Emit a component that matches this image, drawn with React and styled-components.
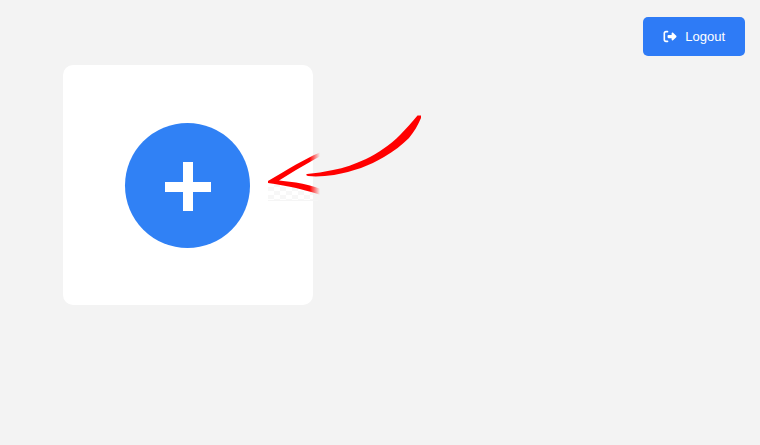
import React from "react";
import styled, { createGlobalStyle } from "styled-components";
import { FaRightFromBracket } from "react-icons/fa6";

const GlobalStyle = createGlobalStyle`
  *, *::before, *::after { box-sizing: border-box; }
  body {
    margin: 0;
    background: #f3f3f3;
    font-family: "Liberation Sans", Arial, sans-serif;
  }
`;

const Page = styled.div`
  display: flex;
  flex-direction: column;
  min-height: 100vh;
`;

const TopBar = styled.header`
  display: flex;
  justify-content: flex-end;
  padding: 17px 15px 9px;
`;

const LogoutButton = styled.button`
  display: inline-flex;
  align-items: center;
  gap: 8px;
  padding: 12px 20px;
  border: 0;
  border-radius: 5px;
  background: #2e7bf6;
  color: #fff;
  font-family: inherit;
  font-size: 13px;
  line-height: 15px;
  cursor: pointer;

  svg {
    width: 14px;
    height: 13px;
  }
`;

const Main = styled.main`
  display: flex;
  flex-wrap: wrap;
  gap: 20px;
  padding: 0 63px 63px;
`;

const Card = styled.section`
  position: relative;
  width: 250px;
  min-height: 240px;
  padding: 58px 62px 57px;
  border-radius: 10px;
  background: #fff;
`;

const AddButton = styled.button`
  display: flex;
  align-items: center;
  justify-content: center;
  width: 125px;
  height: 125px;
  padding: 0;
  border: 0;
  border-radius: 50%;
  background: #3081f5;
  cursor: pointer;

  svg {
    display: block;
    width: 51px;
    height: 51px;
  }
`;

const Pointer = styled.svg`
  position: absolute;
  left: 200px;
  top: 45px;
  width: 160px;
  height: 95px;
  pointer-events: none;
`;

function PlusIcon() {
  return (
    <svg viewBox="0 0 51 51" fill="#fff" aria-hidden="true">
      <path d="M21 2h10v20h18v10H31v19H21V32H3V22h18z" />
    </svg>
  );
}

function ArrowPointer() {
  return (
    <Pointer viewBox="0 0 160 95" aria-hidden="true">
      <defs>
        <linearGradient id="barb" gradientUnits="userSpaceOnUse" x1="5" y1="0" x2="57" y2="0">
          <stop offset="0" stopColor="#f00" />
          <stop offset="0.8" stopColor="#f00" />
          <stop offset="1" stopColor="#f00" stopOpacity="0" />
        </linearGradient>
        <pattern id="checks" width="12" height="8" patternUnits="userSpaceOnUse" x="5" y="77">
          <path d="M0 0h6v4H0zM6 4h6v4H6z" fill="#f7f7f7" />
        </pattern>
      </defs>
      <path d="M5 73L50 80V90H5z" fill="url(#checks)" />
      <path d="M5 90.500H55" stroke="#f5f5f5" fill="none" />
      <path
        d="M44 64Q42 65 45 66C54 67 62 66 71 65C81 63 89 61 98 58C106 55 114 51 121 47C131 41 139 35 146 28C151 22 155 15 158 8V5.500H154.500C149 12 143 19 137 25C127 35 115 43 103 49C92 54 81 58 70 60C61 62 53 63 44 64z"
        fill="#f00"
      />
      <path
        d="M5 71C14 66 23 60 33 54.500L50 45.500L58 42V46L53 48.500L33 60L16 70.500L33 72.500C42 74 50 76 58 79V85L50 82.500L33 78C23 76 14 74 5 73z"
        fill="url(#barb)"
      />
    </Pointer>
  );
}

export default function App() {
  return (
    <>
      <GlobalStyle />
      <Page>
        <TopBar>
          <LogoutButton type="button">
            <FaRightFromBracket aria-hidden="true" />
            Logout
          </LogoutButton>
        </TopBar>
        <Main>
          <Card>
            <AddButton type="button" aria-label="Add">
              <PlusIcon />
            </AddButton>
            <ArrowPointer />
          </Card>
        </Main>
      </Page>
    </>
  );
}
